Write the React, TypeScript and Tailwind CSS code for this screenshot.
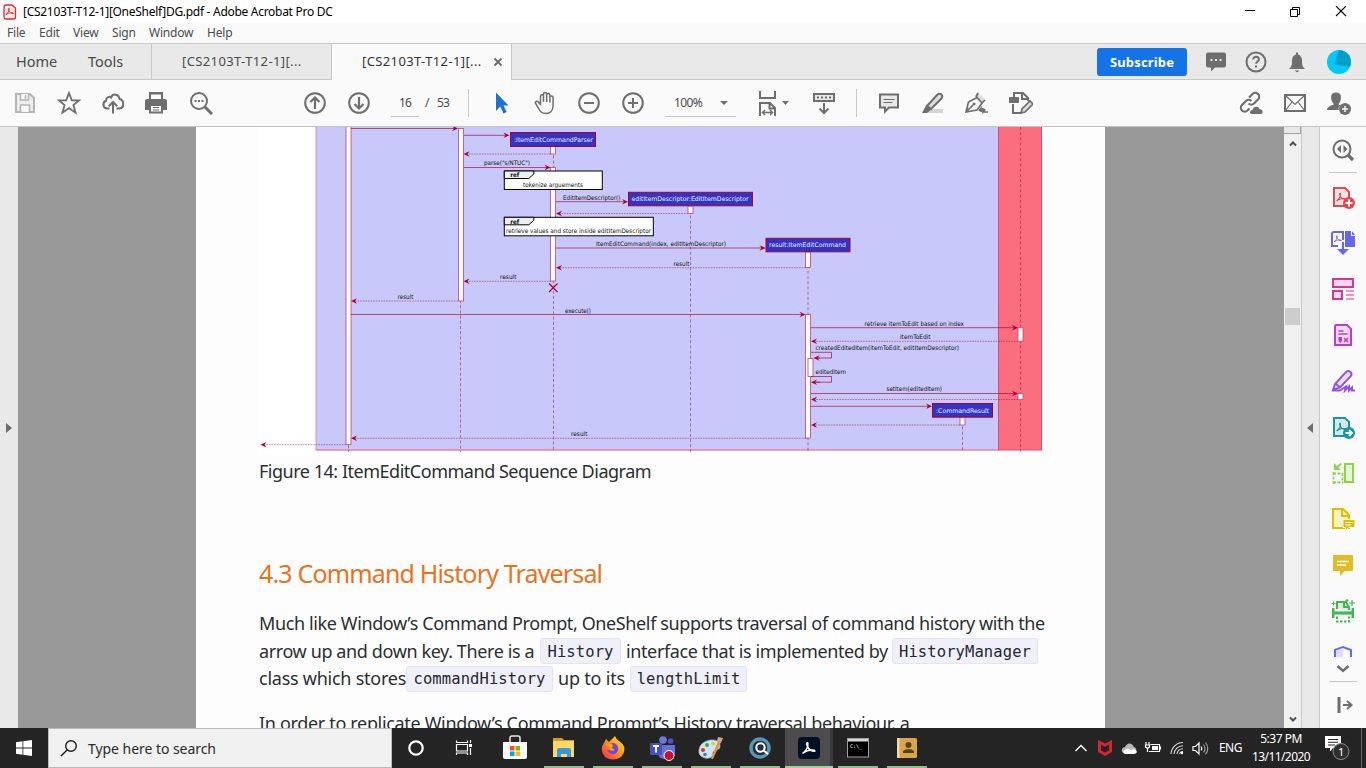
import React from "react";

const UI = "font-['Noto_Sans','Open_Sans',sans-serif]";
const G = "#6e6e6e";

function Cell({ children, className = "w-11" }: { children?: React.ReactNode; className?: string }) {
  return <div className={`flex h-full shrink-0 items-center justify-center ${className}`}>{children}</div>;
}

function Icon({ s = 24, children, c = G, w = 2 }: { s?: number; children: React.ReactNode; c?: string; w?: number }) {
  return (
    <svg width={s} height={s} viewBox={`0 0 ${s} ${s}`} fill="none" stroke={c} strokeWidth={w} className="shrink-0">
      {children}
    </svg>
  );
}

function PdfMark({ x, y, k = 1, c }: { x: number; y: number; k?: number; c: string }) {
  return (
    <path
      transform={`translate(${x} ${y}) scale(${k})`}
      d="M0 8C2.500 6.500 4.500 3 4 .5C3.500 -.5 2.500 1 3.500 2.500C4.500 5 6.500 6.500 9 6.500C10 5 4 5 0 8"
      stroke={c}
      strokeWidth={1.1}
      fill="none"
    />
  );
}

function TitleBar() {
  return (
    <div className="flex h-[23px] shrink-0 items-center bg-white">
      <div className="ml-[3px] flex h-full w-[20px] items-center">
        <svg width="14" height="16" viewBox="0 0 14 16" fill="none">
          <path d="M1 3Q1 1 3 1H9L12.500 4V13Q12.500 15 10.500 15H3Q1 15 1 13Z" stroke="#e5252a" strokeWidth="1.300" fill="#fdeceb" />
          <PdfMark x={2.8} y={4} k={0.85} c="#e5252a" />
        </svg>
      </div>
      <span className="text-[12px] leading-[22px] tracking-[-0.29px] text-black">[CS2103T-T12-1][OneShelf]DG.pdf - Adobe Acrobat Pro DC</span>
      <div className="ml-auto flex h-full items-center">
        <Cell className="w-[45px]"><Icon s={12} c="#000" w={1}><path d="M1 4.500h10" /></Icon></Cell>
        <Cell className="w-[45px]"><Icon s={12} c="#000" w={1}><path d="M1.500 3.500h7v7h-7zM3.500 3.500v-2h7v7h-2" /></Icon></Cell>
        <Cell className="w-[49px] pr-px"><Icon s={12} c="#000" w={1.1}><path d="M1 0l10 10M11 0L1 10" /></Icon></Cell>
      </div>
    </div>
  );
}

function MenuBar() {
  return (
    <div className="flex h-[20px] shrink-0 items-center bg-[#fafafa] pl-[7px] text-[12px] leading-[20px] tracking-[-0.2px] text-[#4b4b4b]">
      <span className="w-[32px]">File</span>
      <span className="w-[34px]">Edit</span>
      <span className="w-[39px]">View</span>
      <span className="w-[37px]">Sign</span>
      <span className="w-[58px]">Window</span>
      <span>Help</span>
    </div>
  );
}

function TabBar() {
  return (
    <div className="flex h-[37px] shrink-0 border-t border-[#c8c8c8] bg-[#e9e9e9] text-[#4b4b4b]">
      <div className="flex w-[152px] items-center border-r border-b border-[#c8c8c8] pl-[16px] text-[14.500px] tracking-[0px]">
        <span className="w-[72px]">Home</span>
        <span>Tools</span>
      </div>
      <div className="flex w-[180px] items-center border-r border-b border-[#c8c8c8] pl-[30px] text-[13px] tracking-[0.38px]">[CS2103T-T12-1][...</div>
      <div className="flex w-[180px] items-center border-r border-[#c8c8c8] bg-[#fafafa] pl-[30px] text-[13px] tracking-[0.38px] text-[#323232]">
        <span className="w-[130px]">[CS2103T-T12-1][...</span>
        <Icon s={12} w={2}><path d="M2.500 2.500l7 7M9.500 2.500l-7 7" /></Icon>
      </div>
      <div className="flex flex-1 items-center justify-end border-b border-[#c8c8c8]">
        <div className="mr-[8px] flex h-[28px] w-[90px] items-center justify-center rounded-[3px] bg-[#1473e6] text-[13px] leading-[26px] font-bold tracking-[0.15px] text-white">Subscribe</div>
        <Cell className="w-[41px]">
          <Icon>
            <path d="M4 2.500h16q2 0 2 2v11q0 2-2 2h-9l-4 4v-4h-3q-2 0-2-2v-11q0-2 2-2z" fill={G} stroke="none" />
            <path d="M6.500 10h2M11 10h2M15.500 10h2" stroke="#e9e9e9" />
          </Icon>
        </Cell>
        <Cell className="w-[41px] pr-px">
          <Icon>
            <circle cx="12" cy="12" r="9.500" />
            <path d="M9.200 9.500c0-3.700 5.700-3.500 5.700 0c0 2-2.800 2-2.800 4.200M12 15.500v2" />
          </Icon>
        </Cell>
        <Cell className="w-[40px]">
          <Icon>
            <path d="M4 19c2-2 3-3 3-8c0-4 2-6 4-6.500V2.500h2v2c2 .5 4 2.500 4 6.500c0 5 1 6 3 8zM9.500 20.500h5l-2.500 2z" fill={G} stroke="none" />
          </Icon>
        </Cell>
        <Cell className="w-[49px] pr-[5px]">
          <svg width="24" height="24" viewBox="0 0 24 24">
            <circle cx="12" cy="12" r="12" fill="#00c8fa" />
            <path d="M12 0L7.500 14.500L23 16.500A12 12 0 0 0 12 0" fill="#009ec8" />
          </svg>
        </Cell>
      </div>
    </div>
  );
}

function Toolbar() {
  return (
    <div className="flex h-[47px] shrink-0 items-center border-b border-[#c4c4c4] bg-[#fafafa] pl-[3px] text-[#4b4b4b]">
      <Cell>
        <Icon c="#b5b5b5">
          <path d="M3 3h14l4 4v14H3z" fill="#ededed" />
          <path d="M7.500 3v6h8V3M12.500 4v4M7.500 21v-7h9v7" fill="#fafafa" strokeWidth={1.5} />
        </Icon>
      </Cell>
      <Cell><Icon><path d="M12 2l2.800 7.300h7.500l-5.900 4.800l2.200 7.600l-6.600-4.500l-6.600 4.500l2.200-7.600L1.700 9.300h7.500z" strokeWidth={1.800} /></Icon></Cell>
      <Cell><Icon><path d="M8.500 17.500H6a4 4 0 0 1-1-7.700C5 6 9 5 10 6.500C12 2 18 3 18.500 8c5 1 5 9.500-.5 9.500h-2.500M12 22.500V11.500M7.800 15.200l4.200-4.200l4.200 4.200" /></Icon></Cell>
      <Cell className="w-11 pr-[2px]">
        <Icon>
          <path d="M5 1h14v7H5z" fill={G} stroke="none" />
          <path d="M7 3.500h10V8H7z" fill="#fafafa" stroke="none" />
          <path d="M1 10q0-2 2-2h18q2 0 2 2v9H1z" fill={G} stroke="none" />
          <path d="M6 14h12v7.500H6z" fill="#fafafa" />
          <path d="M9 16.500h6M9 19h6" strokeWidth={1} />
        </Icon>
      </Cell>
      <Cell>
        <Icon>
          <circle cx="10" cy="10" r="8" />
          <path d="M16 16l7 7" strokeWidth={3} />
          <path d="M5.500 10h2M9 10h2M12.500 10h2" />
        </Icon>
      </Cell>
      <Cell className="ml-[70px] w-11"><Icon><circle cx="12" cy="12" r="9.800" /><path d="M12 18V7M7.500 11l4.500-4.500l4.500 4.500" strokeWidth={2.200} /></Icon></Cell>
      <Cell><Icon><circle cx="12" cy="12" r="9.800" /><path d="M12 6v11M7.500 13l4.500 4.500l4.500-4.500" strokeWidth={2.200} /></Icon></Cell>
      <div className="ml-[10px] flex h-[27px] w-[28px] items-center justify-center border-b border-[#c8c8c8] text-[12px] tracking-[-0.9px]">16</div>
      <span className="ml-[6px] text-[12px] tracking-[-0.5px]">/</span>
      <span className="ml-[8px] w-[31px] text-[12px] tracking-[-0.9px]">53</span>
      <div className="h-[28px] w-px bg-[#c8c8c8]" />
      <Cell className="ml-[11px] w-[43px]"><Icon><path d="M7 1.500v18.500l4.300-4.500l3.200 7l3.200-1.500l-3.200-6.500h5z" fill="#1f72d2" stroke="none" /></Icon></Cell>
      <Cell className="w-11 pl-px">
        <Icon>
          <path d="M7.500 14V5.500c0-2.300 3-2.300 3 0V11M10.500 5V3c0-2 3.200-2 3.200 0v8M13.700 4c0-2 3.200-2 3.200 0v7.500M16.900 6.500c0-2 3.200-2 3.200 0v8c0 5-3 8-7 8c-4.500 0-6-2-8-6l-2.500-4c-1-2 1.500-3 3-1.300l2.200 2.800" strokeWidth={1.500} />
        </Icon>
      </Cell>
      <Cell><Icon><circle cx="12" cy="12" r="9.800" /><path d="M7 12h10" /></Icon></Cell>
      <Cell><Icon><circle cx="12" cy="12" r="9.800" /><path d="M7 12h10M12 7v10" /></Icon></Cell>
      <div className="ml-[10px] flex h-[28px] w-[71px] items-center justify-between border-b border-[#c8c8c8] pr-[8px] pl-[9px] text-[12px] tracking-[-0.6px]">
        100%
        <svg width="8" height="4" viewBox="0 0 8 4"><path d="M0 0h8L4 4z" fill={G} /></svg>
      </div>
      <div className="ml-[21px] flex w-[56px] items-center gap-[3px]">
        <svg width="22" height="26" viewBox="0 0 22 26" fill="none" stroke={G} strokeWidth="2">
          <path d="M3 1v7h15V1M3 26V13h10l5 5v8M12.500 13v5.500h5" />
          <path d="M6 22.500h9M8 20l-2.500 2.500L8 25M13 20l2.500 2.500L13 25" strokeWidth="1.500" />
        </svg>
        <svg width="8" height="4" viewBox="0 0 8 4"><path d="M0 0h7L3.500 4z" fill={G} /></svg>
      </div>
      <Cell className="-ml-[11px] w-11">
        <Icon>
          <path d="M2 3h20v7H2z" fill="#e8e8e8" />
          <path d="M5 6.500h2M9 6.500h2M13 6.500h2M17 6.500h2M12 12v9M7.500 17.500l4.500 4.500l4.500-4.500" />
        </Icon>
      </Cell>
      <div className="ml-[10px] h-[28px] w-px bg-[#c8c8c8]" />
      <Cell className="ml-[10px] w-11">
        <Icon>
          <path d="M3 3.500h18v13h-9l-4 4v-4H3z" fill="#e8e8e8" />
          <path d="M6.500 8.500h11M6.500 11.500h9" strokeWidth={1.200} />
        </Icon>
      </Cell>
      <Cell className="w-11 pr-[2px]">
        <Icon>
          <path d="M10 18h13v4H6z" fill="#d4d4d4" stroke="none" />
          <path d="M7 15L17.500 3.500q2-1.500 4 0q1.500 2 0 4L11 18z" fill="#ddd" />
          <path d="M6.500 13.500L2 22h5l5-4z" fill={G} stroke="none" />
        </Icon>
      </Cell>
      <Cell className="w-11 pr-px">
        <Icon>
          <path d="M14 2l7 6l-4 3l-6-6z" fill="#ddd" stroke="none" />
          <path d="M2 21l2.500-10L13 6.500l5 5.500L13 19zM3 20l6-6M12 6l2-4M18 12l3-3" strokeWidth={1.700} />
          <circle cx="10" cy="13" r="1.500" fill={G} stroke="none" />
          <path d="M15 20l2-3v4l2-4v4l2-3l-1 3h4" strokeWidth={1.500} />
        </Icon>
      </Cell>
      <Cell>
        <Icon>
          <path d="M5 6V2h9l5 5v3M13 2v6h5M4 13v9h8" />
          <rect x="0" y="6" width="10" height="6" rx="1" fill={G} stroke="none" />
          <path d="M12 22l1-4l8-8l3 3l-8 8z" fill="#ddd" strokeWidth={1.700} />
        </Icon>
      </Cell>
      <div className="ml-auto flex h-full pr-[5px]">
        <Cell>
          <Icon>
            <path d="M9.500 12.500a4 4 0 0 0 5.500 0l4-4a3.800 3.800 0 0 0-5.500-5.500L10 6.500M12.500 10a4 4 0 0 0-5.500 0l-4 4a3.800 3.800 0 0 0 5.500 5.500l2-2" strokeWidth={2.200} />
            <path d="M13 23c-3 0-2.500-4 .5-4c.5-4 6-4.500 7-1c4 .5 4 5 1 5z" fill={G} stroke="none" />
          </Icon>
        </Cell>
        <Cell><Icon><path d="M2 4h20v16H2z" /><path d="M2 4l10 9.500L22 4M2 20l7-9M22 20l-7-9" strokeWidth={1.200} /></Icon></Cell>
        <Cell>
          <Icon>
            <path d="M0 19q0-4 7-5.500q-3-3-3-7q0-5 5-5t5 5q0 4-2.500 7q1.500.5 2 1q-3 2-1.500 4.500z" fill={G} stroke="none" />
            <circle cx="18" cy="18" r="6" fill={G} stroke="none" />
            <path d="M15 18h6M18 15v6" stroke="#fafafa" strokeWidth={1.500} />
          </Icon>
        </Cell>
      </div>
    </div>
  );
}

/* ---------- sequence diagram ---------- */

const RED = "#a80036";

function Msg({ x1, x2, y, dashed }: { x1: number; x2: number; y: number; dashed?: boolean }) {
  const d = x2 > x1 ? -1 : 1;
  return (
    <g>
      <line x1={x1} x2={x2 + d * 2} y1={y} y2={y} stroke={RED} strokeWidth={dashed ? 0.8 : 0.9} strokeDasharray={dashed ? "1.600 1" : undefined} opacity={dashed ? 0.6 : 0.72} />
      <path d={`M${x2} ${y}l${d * 6} -2.800l${d * -2} 2.800l${d * 2} 2.800z`} fill={RED} />
    </g>
  );
}

function Label({ x, y, w, children }: { x: number; y: number; w: number; children: string }) {
  return (
    <text x={x} y={y} textLength={w} lengthAdjust="spacingAndGlyphs" fill="#111" fontSize={6.2} className="font-['DejaVu_Sans',sans-serif]">
      {children}
    </text>
  );
}

function Life({ x, y1, y2 }: { x: number; y1: number; y2: number }) {
  return <line x1={x} x2={x} y1={y1} y2={y2} stroke={RED} strokeWidth={1} strokeDasharray="3 2.200" opacity={0.5} />;
}

function Act({ x, y, h }: { x: number; y: number; h: number }) {
  return <rect x={x - 2.5} y={y} width={5} height={h} fill="#fff" stroke="#c4557c" strokeWidth={0.9} />;
}

function Obj({ x, y, w, h, tx, tw, children }: { x: number; y: number; w: number; h: number; tx: number; tw: number; children: string }) {
  return (
    <g>
      <rect x={x} y={y} width={w} height={h} fill="#3333c4" stroke={RED} strokeWidth={1} />
      <text x={tx} y={y + 9} textLength={tw} lengthAdjust="spacingAndGlyphs" fill="#f0f0ff" fontSize={6.4} className="font-['DejaVu_Sans',sans-serif]">{children}</text>
    </g>
  );
}

function Ref({ x, y, w, tx, tw, children }: { x: number; y: number; w: number; tx: number; tw: number; children: string }) {
  return (
    <g stroke="#000" strokeWidth={1}>
      <rect x={x} y={y} width={w} height={18.5} fill="#fff" />
      <path d={`M${x} ${y}h29.500v3l-5 4.500h-24.500z`} fill="#eee" />
      <text x={x + 6} y={y + 6.3} fontSize={6.2} fontWeight="bold" stroke="none" fill="#111" textLength={9} lengthAdjust="spacingAndGlyphs" className="font-['DejaVu_Sans',sans-serif]">ref</text>
      <text x={tx} y={y + 15.6} fontSize={6.2} stroke="none" fill="#111" textLength={tw} lengthAdjust="spacingAndGlyphs" className="font-['DejaVu_Sans',sans-serif]">{children}</text>
    </g>
  );
}

function Diagram() {
  return (
    <svg width="789" height="328" viewBox="258 127 789 328" className="block bg-white">
      <rect x="316" y="100" width="682.500" height="350" fill="#c8c8fa" stroke="#e08fb0" strokeWidth="1" />
      <rect x="998.500" y="100" width="43" height="350" fill="#fa6e80" stroke="#d0507a" strokeWidth="1" />
      <path d="M316 450h682" stroke="#e0809c" strokeWidth="1.200" />
      <Life x={348.500} y1={440} y2={452} />
      <Life x={460.500} y1={300} y2={452} />
      <Life x={553.500} y1={145} y2={452} />
      <Life x={690.500} y1={205} y2={452} />
      <Life x={808} y1={250} y2={452} />
      <Life x={962.500} y1={416} y2={452} />
      <Life x={1020.500} y1={127} y2={452} />
      <Act x={348.500} y={120} h={324.500} />
      <Act x={461} y={128.500} h={172.500} />
      <Act x={553} y={145} h={9} />
      <Act x={553} y={167.500} h={113.500} />
      <Act x={690.500} y={206} h={7.500} />
      <Act x={808} y={252} h={15.500} />
      <Act x={808} y={314.500} h={123.500} />
      <Act x={810.500} y={358.500} h={18} />
      <Act x={1020.500} y={327.700} h={13.500} />
      <Act x={1020.500} y={393.500} h={5.800} />
      <Act x={962.500} y={417} h={8} />
      <Msg x1={351} x2={458} y={128.500} />
      <Msg x1={464} x2={509.500} y={135.300} />
      <Msg x1={551} x2={463.500} y={154} dashed />
      <Msg x1={464} x2={550.500} y={167.500} />
      <Msg x1={556} x2={628} y={201.700} />
      <Msg x1={688} x2={556} y={213.500} dashed />
      <Msg x1={556} x2={765.500} y={248} />
      <Msg x1={806} x2={556} y={267.700} dashed />
      <Msg x1={551} x2={463.500} y={281.300} dashed />
      <Msg x1={458} x2={351} y={301} dashed />
      <Msg x1={351} x2={805.500} y={314.500} />
      <Msg x1={811} x2={1018} y={327.700} />
      <Msg x1={1018} x2={811} y={341.300} dashed />
      <Msg x1={811} x2={1018} y={393.500} />
      <Msg x1={1018} x2={811} y={399.500} dashed />
      <Msg x1={811} x2={932} y={406.300} />
      <Msg x1={960} x2={811} y={425} dashed />
      <Msg x1={806} x2={351} y={438.300} dashed />
      <Msg x1={346} x2={260.500} y={444.700} dashed />
      <path d="M811 352.300h20.500v5.700h-14M811 376.500h20.500v5.700h-16" fill="none" stroke={RED} strokeWidth={0.9} opacity={0.75} />
      <Msg x1={820} x2={813.500} y={358} />
      <Msg x1={820} x2={811} y={382.200} />
      <path d="M549 283.500l8.500 8.500M557.500 283.500l-8.500 8.500" stroke={RED} strokeWidth={1.200} />
      <Obj x={510.500} y={132.500} w={85} h={14} tx={514} tw={79}>:ItemEditCommandParser</Obj>
      <Obj x={628.500} y={192.300} w={124} h={13.500} tx={631.500} tw={117}>editItemDescriptor:EditItemDescriptor</Obj>
      <Obj x={766} y={238.300} w={84} h={13.500} tx={769} tw={77}>result:ItemEditCommand</Obj>
      <Obj x={932.500} y={403.500} w={60} h={13.700} tx={936} tw={53}>:CommandResult</Obj>
      <Ref x={504.300} y={171} w={98} tx={523} tw={60}>tokenize arguements</Ref>
      <Ref x={504.300} y={217.300} w={149} tx={506} tw={145}>retrieve values and store inside editItemDescriptor</Ref>
      <Label x={484} y={165.200} w={46}>parse("s/NTUC")</Label>
      <Label x={563} y={199.500} w={57.500}>EditItemDescriptor()</Label>
      <Label x={596} y={245.800} w={130}>ItemEditCommand(index, editItemDescriptor)</Label>
      <Label x={673.500} y={265.700} w={16}>result</Label>
      <Label x={500} y={279.200} w={16.500}>result</Label>
      <Label x={397.500} y={298.800} w={16}>result</Label>
      <Label x={565} y={312.500} w={26}>execute()</Label>
      <Label x={864.500} y={325.700} w={99.500}>retrieve itemToEdit based on index</Label>
      <Label x={900} y={339.300} w={30.500}>itemToEdit</Label>
      <Label x={815.500} y={350.200} w={143.500}>createdEditedItem(itemToEdit, editItemDescriptor)</Label>
      <Label x={815.500} y={374.200} w={30.500}>editedItem</Label>
      <Label x={886.500} y={391.300} w={55.500}>setItem(editedItem)</Label>
      <Label x={571} y={436.300} w={16.500}>result</Label>
    </svg>
  );
}

function Code({ children, className }: { children: string; className: string }) {
  return (
    <code className={`inline-flex h-[26px] items-center justify-center rounded-[3px] border border-[#e4e4f0] bg-[#f0f0fa] pt-[3px] font-['DejaVu_Sans_Mono',monospace] text-[15.500px] tracking-[0.1px] text-[#24292e] ${className}`}>{children}</code>
  );
}

function DocPage() {
  return (
    <div className="w-[909px] shrink-0 overflow-hidden bg-[#fdfdfd] pl-[62px] whitespace-nowrap text-[#2a2e32]">
      <Diagram />
      <div className="flex h-[33px] items-center pl-px text-[18px] tracking-[-0.48px]">Figure 14: ItemEditCommand Sequence Diagram</div>
      <h2 className="mt-[68px] flex h-[36px] items-center pl-px text-[25px] tracking-[-0.84px] text-[#e67320]">4.3 Command History Traversal</h2>
      <div className="mt-[17px] pl-px text-[18px] tracking-[-0.385px]">
        <div className="flex h-[28px] items-center">Much like Window’s Command Prompt, OneShelf supports traversal of command history with the</div>
        <div className="flex h-[28px] items-center">
          <span className="w-[281px]">arrow up and down key. There is a</span>
          <Code className="w-[81px]">History</Code>
          <span className="ml-[5px] w-[266px]">interface that is implemented by</span>
          <Code className="w-[146px]">HistoryManager</Code>
        </div>
        <div className="flex h-[27px] items-center">
          <span className="w-[147px] tracking-[-0.25px]">class which stores</span>
          <Code className="w-[147px]">commandHistory</Code>
          <span className="ml-[5px] w-[72px] tracking-[-0.2px]">up to its</span>
          <Code className="w-[117px]">lengthLimit</Code>
        </div>
        <div className="mt-[17px] flex h-[28px] items-center tracking-[-0.33px]">In order to replicate Window’s Command Prompt’s History traversal behaviour, a</div>
      </div>
    </div>
  );
}

function Rail() {
  const box = "flex h-[46px] items-center justify-center shrink-0";
  return (
    <div className="flex w-[46px] shrink-0 flex-col items-center overflow-hidden bg-[#fafafa]">
      <div className="mb-px flex h-[46px] w-[28px] shrink-0 items-center justify-center border-b border-[#c8c8c8]">
        <Icon>
          <circle cx="11" cy="11" r="8.500" />
          <path d="M17 17l5 5" strokeWidth={3.200} />
          <path d="M10 7v8l-4-4zM12.500 7v8l4-4z" fill={G} stroke="none" />
        </Icon>
      </div>
      <div className={box}>
        <Icon c="#e34850">
          <path d="M3 3h11l4 4v14H3z" fill="#fbe3e4" />
          <PdfMark x={5.500} y={8} c="#e34850" />
          <circle cx="18" cy="18" r="6" fill="#e34850" stroke="none" />
          <path d="M14.500 18h7M18 14.500v7" stroke="#fff" strokeWidth={2} />
        </Icon>
      </div>
      <div className={box}>
        <Icon c="#6767ec">
          <path d="M14 0h6v5h4v11H14z" fill="#6767ec" stroke="none" />
          <path d="M21 0v4h3z" fill="#6767ec" stroke="none" />
          <path d="M7 15H1V3q0-2 2-2h9v8M12 11v9" />
          <PdfMark x={3} y={4.500} k={0.8} c="#6767ec" />
          <path d="M6 18h12l-6 6z" fill="#6767ec" stroke="none" />
        </Icon>
      </div>
      <div className={box}>
        <Icon c="#d83790">
          <rect x="2" y="2" width="20" height="8" fill="#f7d7e9" />
          <rect x="2" y="14" width="9" height="8" fill="#f7d7e9" />
          <path d="M15 14h8M15 18h8M15 22h8" strokeWidth={1.200} />
        </Icon>
      </div>
      <div className={box}>
        <Icon c="#c038cc">
          <path d="M4 3q0-1 1-1h11l4 4v16H4z" fill="#f3dcf5" />
          <path d="M7.500 8h5M7.500 11h9" strokeWidth={1.300} />
          <path d="M7.500 14h3.500v4l-1.700 2l-1.800-2z" fill="#c038cc" stroke="none" />
          <path d="M13 15l4 4M17 15l-4 4" strokeWidth={1.600} />
        </Icon>
      </div>
      <div className={box}>
        <Icon c="#9256d9">
          <path d="M2 21l2-6L15 3q2.500-2 4.500 0t0 4.500L9 18.500zM5 15l4 3.500" fill="#eadff8" />
          <path d="M2 21.500h7l6-4l-1 4l4-4v4l3-3v3h3" />
        </Icon>
      </div>
      <div className={box}>
        <Icon c="#1b959a">
          <path d="M3 3h11l4 4v14H3z" fill="#d2eaeb" />
          <PdfMark x={5.500} y={8} c="#1b959a" />
          <circle cx="18" cy="18" r="6" fill="#1b959a" stroke="none" />
          <path d="M14.500 18h6M18 15l3 3l-3 3" stroke="#fff" strokeWidth={1.800} />
        </Icon>
      </div>
      <div className={box}>
        <Icon c="#8cd44a">
          <path d="M14 3h8v18h-8z" fill="#e5f5d6" />
          <path d="M2 12.500h10M2.500 11v12M2 21.500h10M11.500 12v10" strokeDasharray="3 1.500" strokeWidth={1.800} />
          <path d="M3 2v7h7L7.500 6.500L11 3L9.500 2L6 5z" fill="#8cd44a" stroke="none" />
        </Icon>
      </div>
      <div className={box}>
        <Icon c="#dfbf00">
          <path d="M2 2h10l6 6v13H2z" fill="#f8f1c8" />
          <path d="M11 2v7h7" />
          <path d="M12 12.500h12v8h-6.500l-3 3.500v-3.500H12z" fill="#dfbf00" stroke="#fafafa" strokeWidth={1} />
          <path d="M14.500 15.500h7M14.500 18h5" stroke="#fff" strokeWidth={1.200} />
        </Icon>
      </div>
      <div className={box}>
        <Icon c="#e0bd25">
          <path d="M3 2h18q1 0 1 1v14q0 1-1 1h-7l-5 5v-5H3q-1 0-1-1V3q0-1 1-1z" fill="#e0bd25" stroke="none" />
          <path d="M6 8.500h12M6 12h9" stroke="#fff" strokeWidth={1.500} />
        </Icon>
      </div>
      <div className={box}>
        <Icon c="#44b556">
          <path d="M6 10V3h9l3 5v3" fill="#d8f0dc" />
          <path d="M13 3v5h5" />
          <path d="M2.200 9v10M21.800 9v10" strokeWidth={2.500} />
          <path d="M2 14h20" strokeWidth={3.200} />
          <path d="M6 17.500v5h12v-5" strokeDasharray="2.500 1.500" />
          <path d="M2.500 2.500v4M.5 4.500h4M16 0v3M14.500 1.500h3M21 1v6M18 4h6" strokeWidth={1.200} />
        </Icon>
      </div>
      <div className="flex h-[28px] shrink-0 items-end pb-[5px]">
        <svg width="20" height="12" viewBox="0 0 20 12" fill="none">
          <path d="M2 12V5l8-3l8 3v7" stroke="#6767ec" strokeWidth="2" />
          <path d="M3 12V5.500l7-2.500v9z" fill="#ddddfa" />
        </svg>
      </div>
      <div className="flex h-[20px] w-[28px] shrink-0 items-start justify-center border-b border-[#c8c8c8] pt-px">
        <Icon s={14} w={2.400}><path d="M1.500 3L7 8l5.500-5" /></Icon>
      </div>
      <div className="flex h-[46px] shrink-0 items-center pl-[4px]">
        <Icon s={20} w={2.400}><path d="M4 2v16" strokeWidth={3} /><path d="M8 10h8M12 6l4.500 4l-4.500 4" strokeWidth={2} /></Icon>
      </div>
    </div>
  );
}

function ScrollBar() {
  return (
    <div className="flex w-[18px] shrink-0 flex-col items-center border-r border-[#c8c8c8] bg-[#f0f0f0]">
      <div className="h-[7px] w-[17px] border-r border-b border-[#a0a0a0] bg-[#e8e8e8]" />
      <div className="flex h-[20px] items-center"><Icon s={8} c="#505050"><path d="M1 5.500l3-3l3 3" /></Icon></div>
      <div className="mt-[154px] h-[17px] w-[15px] bg-[#cdcdcd]" />
      <div className="mt-auto flex h-[18px] items-center"><Icon s={8} c="#505050"><path d="M1 2.500l3 3l3-3" /></Icon></div>
    </div>
  );
}

/* ---------- taskbar ---------- */

function Task({ children, open = true }: { children: React.ReactNode; open?: boolean }) {
  return (
    <div className="flex w-[49px] shrink-0 flex-col items-center">
      <div className="flex h-[38px] w-full items-center justify-center pt-[2px]">{children}</div>
      <div className={`h-[2px] w-[40px] ${open ? "bg-[#8fbc8b]" : ""}`} />
    </div>
  );
}

function TaskBar() {
  return (
    <div className="flex h-[40px] shrink-0 bg-[#242424]">
      <div className="flex w-[48px] items-center justify-center">
        <svg width="16" height="16" viewBox="0 0 16 16" fill="#fff"><path d="M0 2.200L6.500 1.300V7.600H0zM7.300 1.200L16 0V7.600H7.300zM0 8.400H6.500V14.700L0 13.800zM7.300 8.400H16V16L7.300 14.800z" /></svg>
      </div>
      <div className="flex w-[344px] items-center border border-[#bdbdbd] bg-[#f1f1f1] pl-[11px] text-[14px] tracking-[-0.05px] text-[#2b2b2b]">
        <Icon s={18} c="#1d1d1d" w={1.400}><circle cx="11" cy="7" r="5.300" /><path d="M7.300 10.800L1 17" /></Icon>
        <span className="mt-px ml-[10px] leading-none">Type here to search</span>
      </div>
      <Cell className="w-[48px]"><Icon s={18} c="#fff" w={2.200}><circle cx="9" cy="9" r="6.700" /></Icon></Cell>
      <Cell className="w-[50px] pr-[3px]">
        <Icon s={18} c="#fff" w={1.200}>
          <path d="M1.500 1.500v2h11v-2M1.500 16v-2h11v2M1.500 5.500h11v6.500h-11zM15.500 1v3M15.500 9v7" />
          <path d="M14 5h3v3h-3z" fill="#fff" stroke="none" />
        </Icon>
      </Cell>
      <Task open={false}>
        <svg width="24" height="26" viewBox="0 0 24 26">
          <path d="M7 8V3q0-2 2-2h6q2 0 2 2v5" fill="none" stroke="#e8e8e8" strokeWidth="1.500" />
          <path d="M0 7h24v15q0 2-2 2H2q-2 0-2-2z" fill="#fff" />
          <path d="M7 11h4.500v4.500H7z" fill="#f25022" /><path d="M12.500 11H17v4.500h-4.500z" fill="#7fba00" />
          <path d="M7 16.500h4.500V21H7z" fill="#00a4ef" /><path d="M12.500 16.500H17V21h-4.500z" fill="#ffb900" />
        </svg>
      </Task>
      <Task>
        <svg width="24" height="22" viewBox="0 0 24 22">
          <path d="M1 1h9l2 2h10v5H1z" fill="#d99a1c" />
          <path d="M1 4h21v16H1z" fill="#ffd869" />
          <path d="M5 20v-7q0-2 2-2h10q2 0 2 2v7h-4v-3H9v3z" fill="#3a96dd" />
        </svg>
      </Task>
      <Task>
        <svg width="24" height="24" viewBox="0 0 24 24">
          <defs><linearGradient id="fox" x1="1" y1="0" x2="0" y2="1"><stop offset="0" stopColor="#ffe83a" /><stop offset=".45" stopColor="#ff9a1a" /><stop offset="1" stopColor="#f5205a" /></linearGradient></defs>
          <path d="M3 7L5 3L8 6Q12 2 14 0Q15 3 18 5Q23 8 23.500 13Q23 23 12 23.500Q1 23 .8 13Q1 9 3 7" fill="url(#fox)" />
          <path d="M8 9q4-4 8 0q3 6-2 9q-6 1-8-4q4 0 5-2z" fill="#7646d8" />
          <path d="M4 8l7 0l1 3l-4 2q2 3 6 1" fill="#ffa51f" />
        </svg>
      </Task>
      <Task>
        <svg width="26" height="25" viewBox="0 0 26 25">
          <circle cx="14" cy="4" r="3.800" fill="#6e76e0" /><circle cx="21.500" cy="5" r="2.800" fill="#4c54c4" />
          <path d="M9 9h17v8q-1 6-7 6h-4q-6-1-6-7z" fill="#6570d8" />
          <rect x="1" y="7" width="12" height="12" rx="1" fill="#4650b8" />
          <path d="M4 10h6M7 10v6.500" stroke="#fff" strokeWidth="1.800" />
          <circle cx="20" cy="19.500" r="5" fill="#c4112c" stroke="#fff" strokeWidth="1" />
        </svg>
      </Task>
      <Task>
        <svg width="26" height="24" viewBox="0 0 26 24">
          <path d="M1 14Q2 6 12 4Q22 3 22 10Q22 14 17 14Q14 16 15 19Q13 23 7 22Q0 20 1 14" fill="#cfe5f2" stroke="#92b8cf" strokeWidth=".8" />
          <circle cx="5" cy="14" r="2" fill="#d9362b" /><circle cx="9" cy="9" r="2" fill="#48a53c" /><circle cx="15" cy="7.500" r="1.800" fill="#f0c030" /><circle cx="7" cy="18.500" r="1.800" fill="#3a7ad0" />
          <path d="M13 23L20 5l3 1l-8 17z" fill="#e2923c" /><path d="M19 5l1-4l5 1l-2 5z" fill="#c8a98a" />
        </svg>
      </Task>
      <Task>
        <svg width="22" height="22" viewBox="0 0 22 22" fill="none">
          <circle cx="11" cy="11" r="9" stroke="#5a96b8" strokeWidth="3.500" /><circle cx="11" cy="11" r="7" fill="#26313a" />
          <circle cx="11.500" cy="10.500" r="4.200" stroke="#fff" strokeWidth="2" /><path d="M14 13l5 4" stroke="#fff" strokeWidth="2" />
        </svg>
      </Task>
      <div className="ml-px flex w-[48px] shrink-0 flex-col border-r-[3px] border-[#3a3a3a] bg-[#4c4c4c]">
        <div className="flex h-[38px] items-center justify-center pt-[2px] pl-[3px]">
          <svg width="22" height="22" viewBox="0 0 22 22"><rect width="22" height="22" rx="4" fill="#001023" /><PdfMark x={4.500} y={5.500} k={1.350} c="#fff" /></svg>
        </div>
        <div className="-mr-[3px] h-[2px] bg-[#a3cf9e]" />
      </div>
      <Task>
        <svg width="22" height="20" viewBox="0 0 22 20">
          <rect x=".5" y=".5" width="21" height="18.500" fill="#000" stroke="#a0a0a0" /><path d="M1 1h20v2.500H1z" fill="#d8d8d8" />
          <text x="3" y="9.500" fontSize="5" fill="#fff" className="font-['DejaVu_Sans_Mono',monospace]">C:\_</text>
        </svg>
      </Task>
      <Task>
        <svg width="20" height="20" viewBox="0 0 20 20"><rect width="20" height="20" rx="1.500" fill="#d9a64e" /><path d="M0 0h2.500v20H0z" fill="#f3dca5" /><circle cx="11.500" cy="7" r="3" fill="#59431f" /><path d="M6 15v-2q2-2 5.500-2t5.500 2v2z" fill="#59431f" /></svg>
      </Task>
      <div className="ml-auto flex items-center text-[12px] text-white">
        <Cell className="w-[24px]"><Icon s={14} c="#fff" w={1.300}><path d="M1.500 10L7 4.500L12.500 10" /></Icon></Cell>
        <Cell className="w-[24px]"><svg width="14" height="16" viewBox="0 0 14 16"><path d="M0 0L7 3.500L14 0V12L7 16L0 12zM3 4.500V10.500L7 12.500L11 10.500V4.500L7 6.700z" fill="#d0282e" fillRule="evenodd" /></svg></Cell>
        <Cell className="w-[24px]"><svg width="16" height="11" viewBox="0 0 16 11"><path d="M3 10Q0 9 1 6Q2 4 4 4Q6 0 9 .5Q12 1 13 4Q16 5 15 8L13 10z" fill="#b8b8b8" /><path d="M3 10.500Q1 8 4 7Q7 4 10 7Q15 5 16 9Q15 11 13 11H4z" fill="#fff" /></svg></Cell>
        <Cell className="w-[24px]"><Icon s={18} c="#fff" w={1.200}><path d="M6.500 5.500h9v7H5M16.500 7.500v3M3.500 9v4M2 3v3M5 3v3M1.500 6h4v2q-2 2-4 0z" /><path d="M8 7h6v4H8z" fill="#fff" stroke="none" /></Icon></Cell>
        <Cell className="w-[24px]"><Icon s={14} c="#ddd" w={1.100}><path d="M1 13A12 12 0 0 1 13 1.500M4 13A9 9 0 0 1 13 4.700M7 13A6 6 0 0 1 13 7.700M9.500 13A3.500 3.500 0 0 1 13 10.500" /><circle cx="12" cy="12" r="1.200" fill="#fff" stroke="none" /></Icon></Cell>
        <Cell className="w-[23px]"><Icon s={17} c="#fff" w={1.200}><path d="M1 6.500h2.500L7 3v11l-3.500-3.500H1zM9 6.500q1.500 2 0 4" /><path d="M11.500 4.500q3 4 0 8M13.500 2.500q4.500 6 0 12" stroke="#999" /></Icon></Cell>
        <span className="ml-[7px] w-[26px] tracking-[-0.55px]">ENG</span>
        <div className="flex w-[72px] flex-col items-center leading-[18px] tracking-[-0.6px]"><span className="tracking-[-0.5px]">5:37 PM</span><span>13/11/2020</span></div>
        <div className="ml-[7px] flex w-[37px] items-center">
          <svg width="26" height="26" viewBox="0 0 26 26">
            <path d="M1 1h16v12H9l-3 3.500V13H1z" fill="#fff" /><path d="M4 4.500h10M4 7.200h10M4 10h7" stroke="#242424" strokeWidth="1.100" />
            <circle cx="17" cy="16.500" r="8" fill="#2f2f2f" stroke="#8c8c8c" />
            <text x="14" y="20.500" fontSize="11" fill="#fff" className="font-['Noto_Sans',sans-serif]">1</text>
          </svg>
        </div>
        <div className="h-full w-[5px] border-l border-[#666]" />
      </div>
    </div>
  );
}

export default function App() {
  return (
    <div className={`flex h-[768px] w-[1366px] flex-col overflow-hidden ${UI}`}>
      <TitleBar />
      <MenuBar />
      <TabBar />
      <Toolbar />
      <div className="flex h-[601px] shrink-0 bg-[#999]">
        <div className="flex w-[18px] items-center bg-[#e9e9e9] pl-[6px]"><svg width="6" height="10" viewBox="0 0 6 10"><path d="M0 0v10l6-5z" fill={G} /></svg></div>
        <div className="w-[178px] shrink-0" />
        <DocPage />
        <div className="flex-1" />
        <ScrollBar />
        <div className="flex w-[18px] items-center border-r border-[#c8c8c8] bg-[#e9e9e9] pl-[5px]"><svg width="6" height="10" viewBox="0 0 6 10"><path d="M6 0v10L0 5z" fill={G} /></svg></div>
        <Rail />
      </div>
      <TaskBar />
    </div>
  );
}
